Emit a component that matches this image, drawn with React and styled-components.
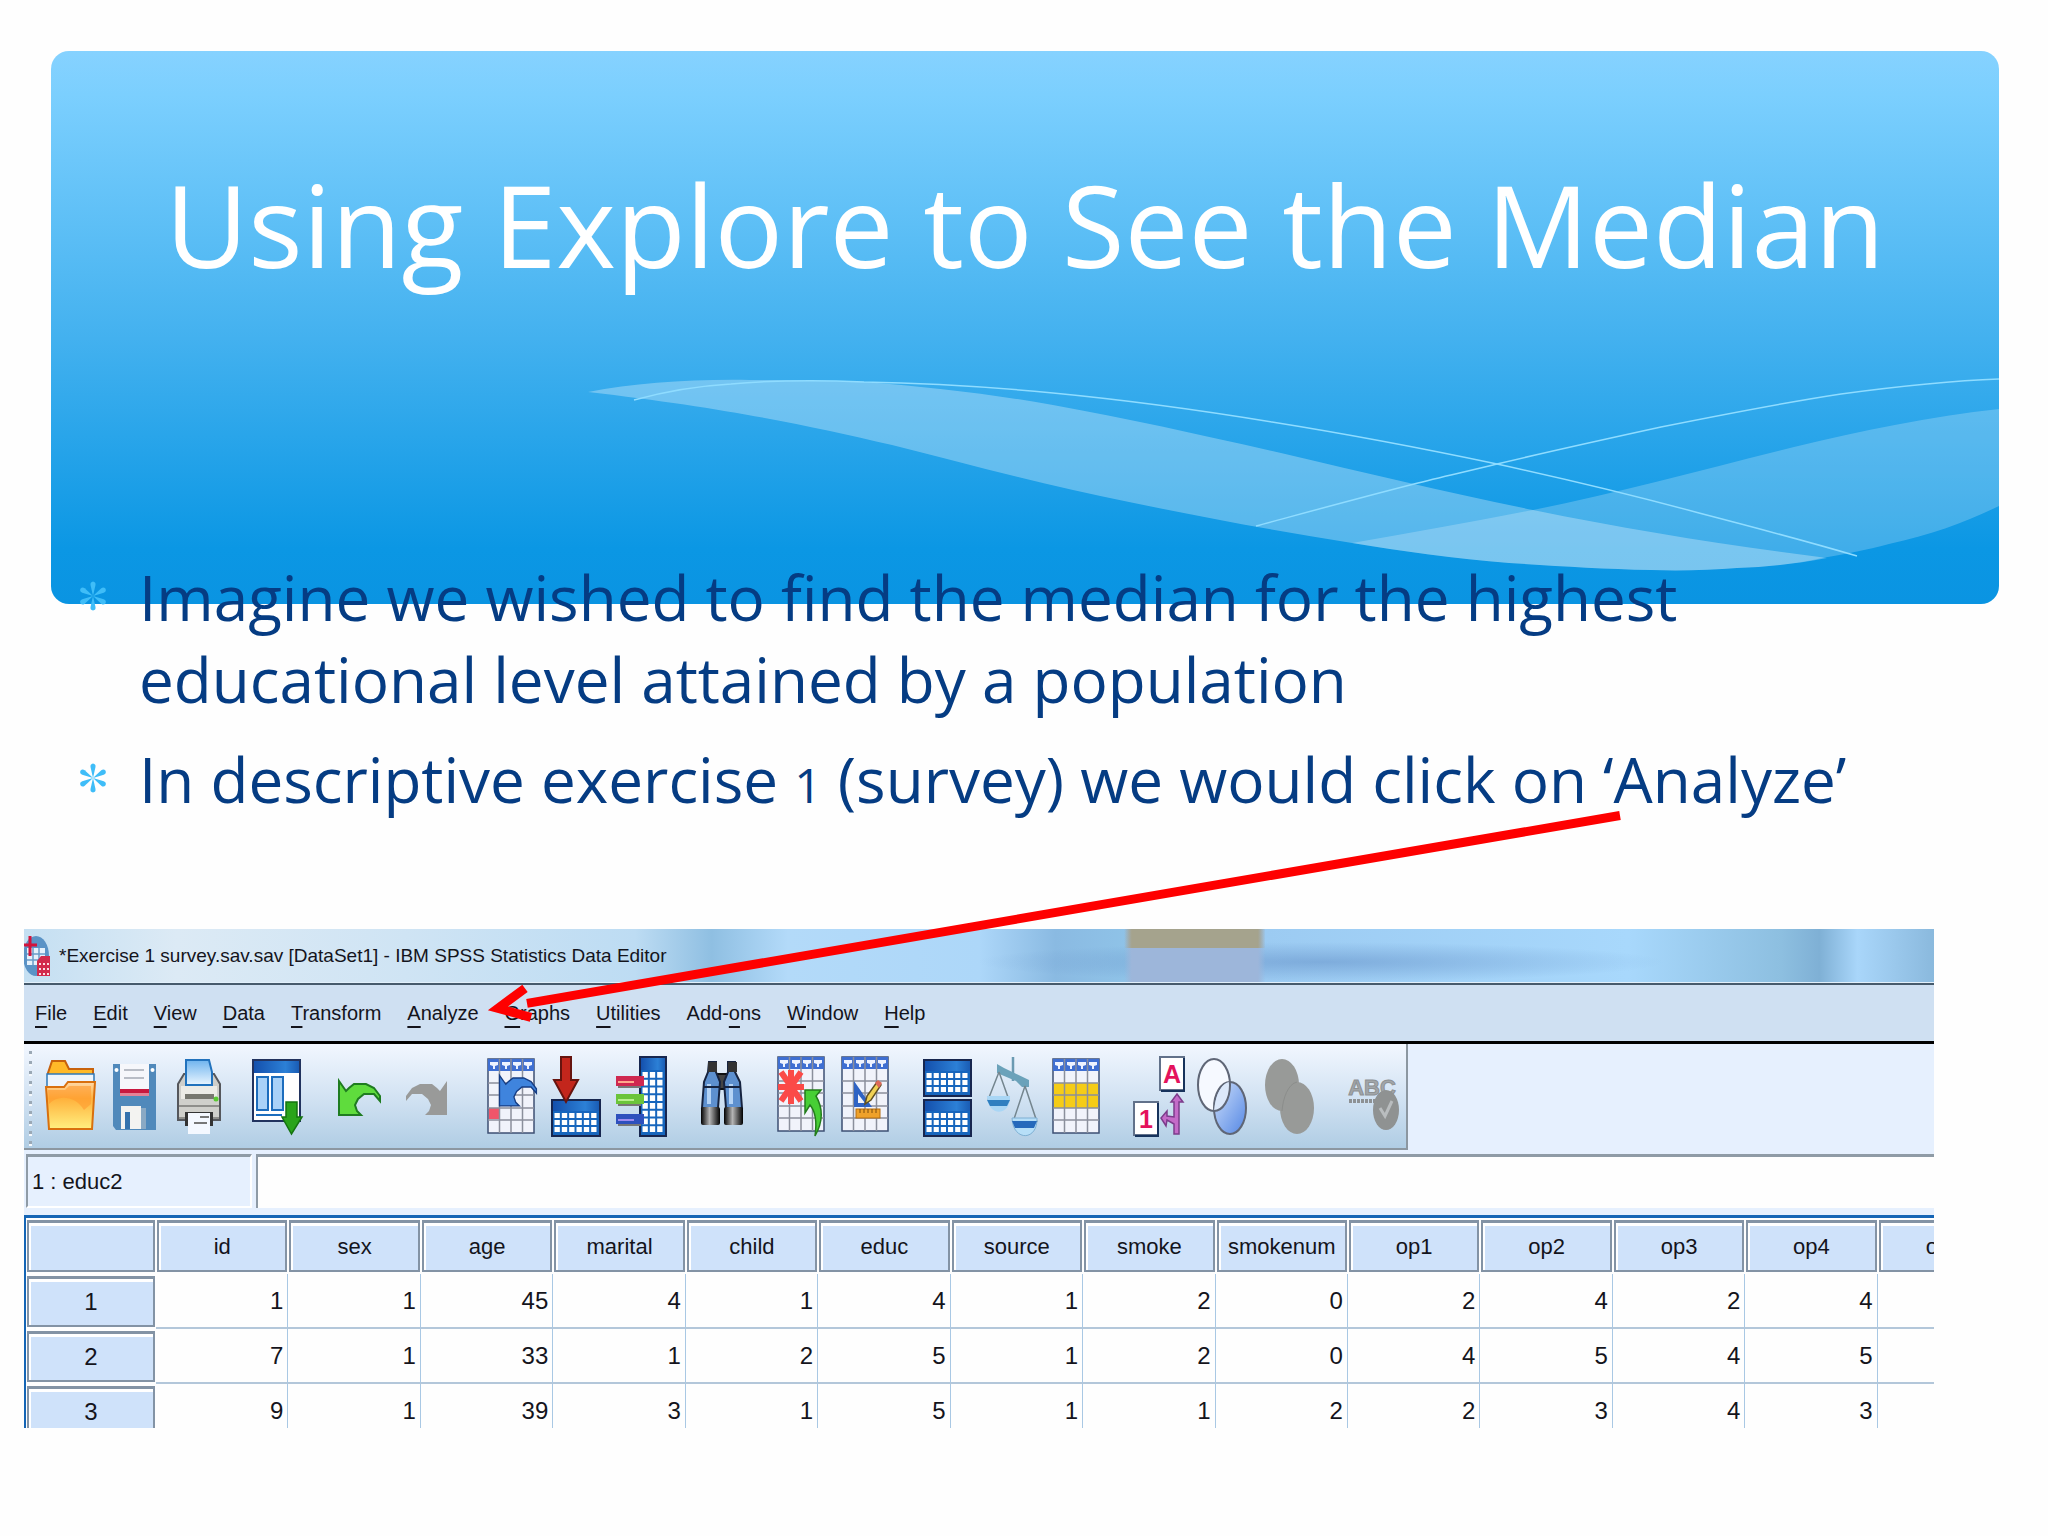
import * as React from 'react';
import styled, { createGlobalStyle } from 'styled-components'

const GlobalStyle = createGlobalStyle`
      body {
        margin: 0;
        background: #fefefe;
      }
      * {
        box-sizing: border-box;
      }
`

const Slide = styled.main`
      position: relative;
      padding: 51px 49px 107px 51px;
      font-family: "Open Sans", sans-serif;
      overflow: hidden;
`

const Banner = styled.header`
      position: relative;
      min-height: 553px;
      padding-top: 96px;
      border-radius: 18px;
      overflow: hidden;
      background: linear-gradient(#86d2ff, #7bcffe 8%, #43b1ef 52%, #0b97e4 90%, #0a94e2);
`

const Waves = styled.svg`
      position: absolute;
      inset: 0;
      width: 100%;
      height: 100%;
`

const Title = styled.h1`
      position: relative;
      margin: 0;
      font-size: 114px;
      line-height: 154px;
      font-weight: 400;
      text-align: center;
      color: white;
`

const Bullets = styled.ul`
      position: relative;
      list-style: none;
      margin: -48px 60px 0 28px;
      padding: 0;
      display: flex;
      flex-direction: column;
      gap: 18px;
`

const Bullet = styled.li`
      display: flex;
      gap: 32px;
      font-size: 62px;
      line-height: 82px;
      color: #053c83;

      > svg {
        flex: none;
        width: 28px;
        height: 82px;
      }
`

const OldNumeral = styled.span`
      font-size: 48px;
      line-height: 1;
`

const Arrow = styled.svg`
      position: absolute;
      left: 0;
      top: 0;
      width: 100%;
      height: 100%;
      pointer-events: none;
`

const Editor = styled.section`
      margin: 109px 65px 0 -27px;
      font-family: "Liberation Sans", Arial, sans-serif;
      color: #14141c;
      background: #e6f0fe;
      overflow: hidden;
`

const TitleBar = styled.div`
      display: flex;
      align-items: center;
      gap: 9px;
      height: 54px;
      border-bottom: 1px solid #e2f0fb;
      background:
        linear-gradient(90deg, transparent 57.6%, #a5a38d 58%, #a5a38d 64.6%, transparent 65%) 0 0 / 100% 19px no-repeat,
        linear-gradient(90deg, transparent 57.6%, #9db6da 58%, #9db6da 64.6%, transparent 65%),
        radial-gradient(closest-side, rgba(100, 145, 200, .55), transparent) 78% 100% / 36% 40px no-repeat,
        linear-gradient(90deg, #c4dff2, #dceaf5 8%, #cfe4f4 20%, #bddcf3 32%, #8fbfe2 36%, #b3daf9 40%, #add7f9 50%, #8abae2 54%, #8fc3e8 58%, #9ccbf2 65%, #a8d8fc 84%, #8dbfe0 92%, #7fb0d5 94%, #a9d6fa 96%, #8ab9dd);
`

const TitleText = styled.h2`
      margin: 0;
      font-size: 19px;
      font-weight: 400;
      white-space: nowrap;
`

const MenuBar = styled.nav`
      display: flex;
      align-items: center;
      gap: 26px;
      height: 61px;
      padding: 0 11px;
      background: #cfe0f2;
      border-top: 2px solid #465a6c;
      border-bottom: 3px solid black;
`

const MenuItem = styled.button`
      border: 0;
      padding: 0;
      background: none;
      font: inherit;
      font-size: 20px;
      line-height: 32px;
      color: inherit;

      u {
        text-underline-offset: 6px;
        text-decoration-thickness: 2px;
      }
`

const Toolbar = styled.div`
      display: flex;
      gap: 31px;
      width: fit-content;
      height: 106px;
      padding: 10px 6px 10px 20px;
      background:
        repeating-linear-gradient(transparent 0 5px, #9aa8b5 5px 8px, #f4f8fc 8px 10px) 5px 2px / 3px 100px no-repeat,
        linear-gradient(#f2f7ff, #d3e3f3 50%, #b0cde4);
      border-right: 2px solid #8c97a1;
      border-bottom: 2px solid #8c97a1;
`

const ToolGroup = styled.div`
      display: flex;
      gap: 12px;
`

const ToolButton = styled.button`
      width: 52px;
      height: 84px;
      padding: 0;
      border: 0;
      background: none;

      svg {
        display: block;
        width: 52px;
        height: 84px;
        overflow: visible;
      }
`

const CellBar = styled.div`
      display: flex;
      gap: 4px;
      height: 65px;
      padding: 4px 0 7px 2px;
`

const CellName = styled.label`
      flex: none;
      width: 226px;
      padding: 0 4px;
      font-size: 22px;
      line-height: 50px;
      border-top: 3px solid #8f9ba6;
      border-left: 2px solid #8f9ba6;
      border-right: 2px solid white;
      border-bottom: 2px solid white;
`

const CellInput = styled.input`
      flex: 1;
      min-width: 0;
      border: 0;
      border-top: 3px solid #8f9ba6;
      border-left: 2px solid #8f9ba6;
      background: #fefefe;
      font: inherit;
      font-size: 22px;
      outline: 0;
`

const Grid = styled.div`
      max-height: 213px;
      overflow: hidden;
      border-top: 3px solid #1565b5;
      border-left: 2px solid #1565b5;
      background: #fefefe;
`

const Sheet = styled.table`
      width: 104%;
      table-layout: fixed;
      border-collapse: separate;
      border-spacing: 0;
      font-size: 24px;
      line-height: 50px;
`

const HeadCell = styled.th`
      width: ${props => props.$corner ? '130px' : 'auto'};
      padding: 2px 1px;
      font-weight: 400;

      > div {
        height: ${props => props.$row ? '51px' : '52px'};
        line-height: ${props => props.$row ? '46px' : '48px'};
        font-size: ${props => props.$row ? '24px' : '22px'};
        background: #cfe2fa;
        border: 2px solid #8393a5;
        border-top-width: 3px;
        box-shadow: inset 2px 3px white;
      }
`

const DataCell = styled.td`
      height: 55px;
      padding: 0 4px;
      text-align: right;
      border-right: 1px solid #a9c8e4;
      border-bottom: 2px solid #b3c7da;
`

const menus = [
  ['', 'F', 'ile'], ['', 'E', 'dit'], ['', 'V', 'iew'], ['', 'D', 'ata'],
  ['', 'T', 'ransform'], ['', 'A', 'nalyze'], ['', 'G', 'raphs'],
  ['', 'U', 'tilities'], ['Add-', 'o', 'ns'], ['', 'W', 'indow'], ['', 'H', 'elp']
]

const columns = ['id', 'sex', 'age', 'marital', 'child', 'educ', 'source', 'smoke', 'smokenum', 'op1', 'op2', 'op3', 'op4', 'op5']

const rows = [
  [1, 1, 45, 4, 1, 4, 1, 2, 0, 2, 4, 2, 4, ''],
  [7, 1, 33, 1, 2, 5, 1, 2, 0, 4, 5, 4, 5, ''],
  [9, 1, 39, 3, 1, 5, 1, 1, 2, 2, 3, 4, 3, '']
]

function Asterisk() {
  return (
    <svg viewBox="0 0 28 82" fill="#3fbdf8" aria-hidden="true">
      {[0, 60, 120, 180, 240, 300].map(angle => (
        <path key={angle} transform={`rotate(${angle} 14 40)`} d="M14 40 L11.5 29 Q11 26 14 25.5 Q17 26 16.5 29 Z" />
      ))}
    </svg>
  )
}

// Spreadsheet page with a blue filter row on top, shared by several buttons
function Page({y = 2, children}) {
  return (
    <g transform={`translate(0 ${y})`}>
      <rect x="3" y="1" width="46" height="74" fill="#f1f3fb" stroke="#3d4f73" strokeWidth="1.5" />
      <rect x="3" y="1" width="46" height="12" fill="#3f6fd2" />
      <path d="M5 4h8v3l-3 1v3h-2v-3l-3-1zM17 4h8v3l-3 1v3h-2v-3l-3-1zM28 4h8v3l-3 1v3h-2v-3l-3-1zM39 4h8v3l-3 1v3h-2v-3l-3-1z" fill="#eef3ff" />
      {children}
      <path d="M3 25h46M3 37h46M3 50h46M3 62h46M14.500 1v74M26 1v74M37.500 1v74" stroke="#8b8f9c" strokeWidth="1.5" />
    </g>
  )
}

// Small blue table with a solid header
function MiniTable({x, y, w, h, head, cols, lines}) {
  const stepX = (w - 4) / cols
  const stepY = (h - head - 3) / lines
  return (
    <g transform={`translate(${x} ${y})`}>
      <rect width={w} height={h} fill="#1766bd" stroke="#17264f" strokeWidth="2" />
      <rect x="1" y="1" width={w - 2} height={head - 2} fill="url(#headBlue)" />
      {Array.from({length: cols * lines}, (_, i) => (
        <rect key={i} x={2.5 + (i % cols) * stepX} y={head + 1 + Math.floor(i / cols) * stepY} width={stepX - 2} height={stepY - 2} fill="white" />
      ))}
    </g>
  )
}

const bend = 'M5 27 L12 37 L15 34 L20 30 H32 L40 34 L46 42 V47 L40 40 H30 L24 45 L21 51 L23 57 L27 61 H5 Z'

const icons = {
  Open: <>
    <path d="M4 22V19L8 7H21L25 15H49V24H4Z" fill="#ffb928" stroke="#c8620c" strokeWidth="2" />
    <path d="M3 20H50V34H3Z" fill="#eef5fd" stroke="#2f79b8" strokeWidth="1.500" />
    <path d="M2 33H20L24 28H51L48 75H5Z" fill="url(#folder)" stroke="#d9700e" strokeWidth="2" />
    <path d="M5 50C14 40 32 42 40 56L47 50L47 32H25L21 36H4Z" fill="#ff9a2e" opacity=".6" />
  </>,
  Save: <>
    <path d="M5 10H48V76H8L5 72Z" fill="#5089bb" />
    <path d="M12 10H41V36H12Z" fill="#f6f7fb" />
    <path d="M16 16H36M16 24H36" stroke="#b9bdc6" strokeWidth="2" />
    <path d="M12 35H41V39H12Z" fill="#c9183f" />
    <path d="M12 39H41V42H12Z" fill="#e58297" />
    <circle cx="8.500" cy="16" r="2" fill="white" /><circle cx="44.500" cy="16" r="2" fill="white" />
    <path d="M13 52H33V75H13Z" fill="#f3f3f1" />
    <path d="M17 58H22V75H17Z" fill="#3472ad" />
    <path d="M33 54H38V75H33Z" fill="#8aa9c4" />
  </>,
  Print: <>
    <path d="M6 30L12 20H42L48 30V66H6Z" fill="#cfcfcb" stroke="#55575c" strokeWidth="2" />
    <path d="M14 6H37L40 18V31H14Z" fill="url(#paper)" stroke="#2172bd" strokeWidth="2" />
    <path d="M9 32H45V45H9Z" fill="#ecebe6" />
    <path d="M13 40H42V45H13Z" fill="#77776f" />
    <circle cx="44" cy="45" r="2.500" fill="#59c932" />
    <path d="M7 52H47M7 64H47" stroke="#8e8e8b" strokeWidth="2" />
    <path d="M13 58H41V72H13Z" fill="#333" />
    <path d="M16 59H38V80H16Z" fill="#f4f8ff" />
    <path d="M28 63H37M22 69H35" stroke="#777" strokeWidth="2" />
  </>,
  'Recall dialogs': <>
    <rect x="2" y="6" width="47" height="61" fill="white" stroke="#22335f" strokeWidth="2" />
    <rect x="3" y="7" width="45" height="12" fill="url(#headBlue)" />
    <path d="M6 23H17V56H6ZM21 23H32V56H21Z" fill="#a9d2f8" stroke="#1c6dbd" strokeWidth="2" />
    <path d="M5 61H31" stroke="#1c6dbd" strokeWidth="2" />
    <path d="M35 48H46V63H51L40.500 80L31 63H35Z" fill="#2aa41a" stroke="#157310" strokeWidth="1.500" />
  </>,
  Undo: <path d={bend} fill="#5fdc3d" stroke="#1f7c20" strokeWidth="2" />,
  Redo: <path d={bend} transform="matrix(-1 0 0 1 50 0)" fill="#999a99" />,
  'Go to case': <>
    <Page y={4}><rect x="4" y="50" width="10" height="11" fill="#f0566a" /></Page>
    <path d={bend} transform="translate(10 -3) scale(.9)" fill="#3f84dd" stroke="#163d84" strokeWidth="1.500" />
  </>,
  'Go to variable': <>
    <MiniTable x={3} y={46} w={48} h={36} head={12} cols={6} lines={3} />
    <path d="M12 3H22V26H29L17 48L5 26H12Z" fill="#c3261c" stroke="#66140f" strokeWidth="2" />
  </>,
  Variables: <>
    <MiniTable x={27} y={3} w={26} h={79} head={14} cols={3} lines={8} />
    <rect x="3" y="22" width="28" height="10" fill="#cf2850" /><rect x="5" y="27" width="16" height="2" fill="#ffa98c" />
    <rect x="3" y="40" width="28" height="10" fill="#6bc43b" /><rect x="5" y="45" width="16" height="2" fill="#b8f08d" />
    <rect x="3" y="60" width="28" height="10" fill="#2e50bd" /><rect x="5" y="65" width="16" height="2" fill="#9d8bf0" />
    <path d="M5 33H28M5 51H28M5 71H28" stroke="#777" strokeWidth="2" />
  </>,
  Find: <>
    <path d="M21 20H31V35H21Z" fill="#444" stroke="#111" strokeWidth="2" />
    <path d="M13 8H20V18L24 28L22 54H6L8 28L12 18Z" fill="#5d90cf" stroke="#16233f" strokeWidth="2" />
    <path d="M32 8H39V18L44 28L46 54H30L28 28L32 18Z" fill="#5d90cf" stroke="#16233f" strokeWidth="2" />
    <path d="M12 8H21V18H12ZM32 8H41V18H32Z" fill="#333" />
    <path d="M13 30V50M35 30V50" stroke="#b4d3f5" strokeWidth="4" />
    <path d="M8 33H23M29 33H44" stroke="#16233f" strokeWidth="2" />
    <rect x="5" y="53" width="19" height="18" rx="2" fill="url(#lens)" />
    <rect x="28" y="53" width="19" height="18" rx="2" fill="url(#lens)" />
  </>,
  'Insert cases': <>
    <Page />
    <path d="M16 16V50M6 18L26 47M26 18L6 47M3 33H29" stroke="#fb4a48" strokeWidth="6" />
    <path d="M30 36H46L41 42C48 54 48 68 40 82C42 68 41 58 35 51L30 59Z" fill="#47cf35" stroke="#237c1c" strokeWidth="1.500" />
  </>,
  'Insert variable': <>
    <Page />
    <path d="M15 27V53H33ZM19 40L26 49H19Z" fill="#2f63c4" fillRule="evenodd" />
    <path d="M26 50L28 42L38 28L42 31L32 46Z" fill="#f0d155" stroke="#604f22" strokeWidth="1.500" />
    <path d="M36 29L39 26L43 29L40 34Z" fill="#dc6a5a" />
    <rect x="17" y="55" width="24" height="9" fill="#efa12a" stroke="#b36d10" strokeWidth="1" />
    <path d="M21 55V59M25 55V59M29 55V59M33 55V59M37 55V59" stroke="#7c4d0c" strokeWidth="1" />
  </>,
  'Split file': <>
    <MiniTable x={2} y={6} w={47} h={36} head={12} cols={6} lines={3} />
    <MiniTable x={2} y={46} w={47} h={36} head={12} cols={6} lines={3} />
  </>,
  'Weight cases': <>
    <path d="M27 3V27" stroke="#6b9ab2" strokeWidth="2.500" />
    <path d="M11 10L18 14L43 26V33H36L30 27L11 19Z" fill="#6ba2ba" />
    <path d="M13 18L2 46M13 18L23 46M39 32L27 68M39 32L51 68" stroke="#74858e" strokeWidth="1.500" />
    <path d="M1 42H24C25 62 2 64 1 42Z" fill="#a9d6f5" />
    <path d="M1 46H24L21 52H4Z" fill="#2f7fc0" />
    <path d="M26 64H51C52 87 27 88 26 64Z" fill="#b7dff8" stroke="#7fb0d3" />
    <path d="M26 67H51L48 74H29Z" fill="#2669bb" />
  </>,
  'Select cases': <Page y={4}><rect x="4" y="25" width="44" height="25" fill="#f5cc17" /></Page>,
  'Value labels': <>
    <rect x="27" y="3" width="24" height="33" fill="white" stroke="#61718a" strokeWidth="2" />
    <path d="M51 4V37H28" fill="none" stroke="#17335c" strokeWidth="2" />
    <text x="39" y="29" textAnchor="middle" fontSize="25" fontWeight="700" fill="#e4135c" fontFamily="Liberation Sans">A</text>
    <rect x="1" y="48" width="24" height="33" fill="white" stroke="#61718a" strokeWidth="2" />
    <path d="M25 49V82H2" fill="none" stroke="#17335c" strokeWidth="2" />
    <text x="13" y="74" textAnchor="middle" fontSize="25" fontWeight="700" fill="#e4135c" fontFamily="Liberation Sans">1</text>
    <path d="M44 40L50 48H46V80H41V70L34 66L33 72L28 64L34 57V62L41 63V48H38Z" fill="#c46bc8" stroke="#7c3c8b" strokeWidth="1.500" />
  </>,
  'Use sets': <>
    <ellipse cx="17" cy="31" rx="16" ry="26" fill="#f6f9ff" />
    <ellipse cx="33" cy="54" rx="16" ry="26" fill="url(#setBlue)" stroke="#5f6676" strokeWidth="2" />
    <path d="M17 57C18 44 23 30 32 28C36 40 27 56 17 57Z" fill="#dce8fa" />
    <ellipse cx="17" cy="31" rx="16" ry="26" fill="none" stroke="#5f6676" strokeWidth="2" />
  </>,
  'Show all': <>
    <ellipse cx="17" cy="31" rx="17" ry="26" fill="#989a98" />
    <ellipse cx="32" cy="54" rx="17" ry="26" fill="#989a98" />
    <path d="M17 57C18 44 23 30 32 28" stroke="#8b8d8b" fill="none" />
  </>,
  'Spell check': <>
    <text x="24" y="41" textAnchor="middle" fontSize="22" fontWeight="700" fill="#a2a6a9" stroke="#8d9194" strokeWidth="1" fontFamily="Liberation Sans">ABC</text>
    <path d="M1 47H28" stroke="#8d9194" strokeWidth="4" strokeDasharray="3 1" />
    <ellipse cx="38" cy="56" rx="13" ry="20" fill="#8f9292" />
    <path d="M32 54L37 62L44 47" fill="none" stroke="#b9bdbf" strokeWidth="3" />
  </>
}

// Drawings whose artwork starts left of the button's own edge
const bleedLeft = ['Recall dialogs', 'Undo', 'Insert cases', 'Insert variable', 'Split file', 'Weight cases', 'Select cases', 'Value labels', 'Use sets']

const groups = [
  ['Open', 'Save', 'Print'],
  ['Recall dialogs'],
  ['Undo', 'Redo'],
  ['Go to case', 'Go to variable', 'Variables'],
  ['Find'],
  ['Insert cases', 'Insert variable'],
  ['Split file', 'Weight cases', 'Select cases'],
  ['Value labels', 'Use sets', 'Show all'],
  ['Spell check']
]

const Defs = styled.svg`
      position: absolute;
      width: 0;
      height: 0;
`

function Gradients() {
  return (
    <Defs aria-hidden="true">
      <defs>
        <linearGradient id="headBlue"><stop stopColor="#1450ad" /><stop offset=".7" stopColor="#2c80d6" /><stop offset="1" stopColor="#1a5cb4" /></linearGradient>
        <linearGradient id="folder" x2="0" y2="1"><stop stopColor="#ffd9a8" /><stop offset=".35" stopColor="#ffb13c" /><stop offset="1" stopColor="#fff080" /></linearGradient>
        <linearGradient id="paper" x2="0" y2="1"><stop stopColor="#6fb4ee" /><stop offset="1" stopColor="#e9f5ff" /></linearGradient>
        <linearGradient id="lens"><stop stopColor="#000" /><stop offset=".45" stopColor="#b5b5b5" /><stop offset="1" stopColor="#000" /></linearGradient>
        <linearGradient id="setBlue" x2="1" y2="1"><stop stopColor="#cfe0fb" /><stop offset="1" stopColor="#5487e4" /></linearGradient>
      </defs>
    </Defs>
  )
}

function AppIcon() {
  return (
    <svg width="26" height="42" viewBox="0 0 26 42" aria-hidden="true">
      <ellipse cx="12" cy="21" rx="13" ry="20" fill="#5b93c6" />
      <path d="M3 13H21V30H3Z" fill="#e6f1fb" />
      <path d="M3 19H21M3 25H21M9 13V30M15 13V30" stroke="#6a9cc9" strokeWidth="1.500" />
      <path d="M0 10H13M6 1V21" stroke="#d3133b" strokeWidth="3" />
      <path d="M13 26L17 21H26V41H13Z" fill="#d22a4c" />
      <path d="M15 29H25M15 34H25M15 39H25" stroke="#fbdde3" strokeWidth="2" strokeDasharray="2 2" />
    </svg>
  )
}

export default function App() {
  return (
    <Slide>
      <GlobalStyle />
      <Gradients />
      <Banner>
        <Waves viewBox="0 0 1948 553" preserveAspectRatio="none" aria-hidden="true">
          <path fill="white" fillOpacity=".3" d="M537 341C585 332 640 328 699 329C740 329 780 330 813 331C880 336 940 343 1002 354C1080 368 1150 384 1230 402C1315 422 1395 441 1482 459C1580 479 1680 495 1776 507C1745 513 1715 516 1686 517C1660 519 1630 520 1600 519C1550 518 1505 515 1458 512C1405 508 1350 500 1301 492C1225 480 1150 466 1078 451C995 434 915 413 841 394C755 374 675 357 537 341Z" />
          <path fill="white" fillOpacity=".22" d="M1301 492C1360 482 1420 471 1482 459C1570 441 1655 418 1743 396C1810 380 1880 365 1948 358V455C1915 471 1880 484 1838 493C1815 499 1795 503 1771 507C1745 513 1715 516 1686 517C1660 519 1630 520 1600 519C1550 518 1505 515 1458 512C1405 508 1350 500 1301 492Z" />
          <path fill="none" stroke="#8fdcff" strokeWidth="1.500" d="M583 349C612 341 645 335 680 333C725 329 770 329 813 331C878 332 940 336 1002 342C1075 349 1148 359 1221 371C1296 383 1370 397 1446 413C1515 428 1582 444 1648 462C1702 476 1755 490 1806 505" />
          <path fill="none" stroke="#8fdcff" strokeWidth="1.500" d="M1205 475C1257 461 1308 447 1363 433C1390 426 1418 420 1446 413C1500 400 1555 388 1610 376C1670 364 1730 352 1790 343C1842 336 1895 330 1948 328" />
        </Waves>
        <Title>Using Explore to See the Median</Title>
      </Banner>
      <Bullets>
        <Bullet>
          <Asterisk />
          <span>Imagine we wished to find the median for the highest educational level attained by a population</span>
        </Bullet>
        <Bullet>
          <Asterisk />
          <span>In descriptive exercise <OldNumeral>1</OldNumeral> (survey) we would click on ‘Analyze’</span>
        </Bullet>
      </Bullets>
      <Editor>
        <TitleBar>
          <AppIcon />
          <TitleText>*Exercise 1 survey.sav.sav [DataSet1] - IBM SPSS Statistics Data Editor</TitleText>
        </TitleBar>
        <MenuBar>
          {menus.map(([before, key, after]) => (
            <MenuItem key={key + after} type="button">{before}<u>{key}</u>{after}</MenuItem>
          ))}
        </MenuBar>
        <Toolbar>
          {groups.map(group => (
            <ToolGroup key={group[0]}>
              {group.map(name => (
                <ToolButton key={name} type="button" aria-label={name}>
                  <svg viewBox={bleedLeft.includes(name) ? '4 0 52 84' : '0 0 52 84'} aria-hidden="true">{icons[name]}</svg>
                </ToolButton>
              ))}
            </ToolGroup>
          ))}
        </Toolbar>
        <CellBar>
          <CellName htmlFor="cell">1 : educ2</CellName>
          <CellInput id="cell" type="text" />
        </CellBar>
        <Grid>
          <Sheet>
            <thead>
              <tr>
                <HeadCell $corner><div /></HeadCell>
                {columns.map(name => <HeadCell key={name} scope="col"><div>{name}</div></HeadCell>)}
              </tr>
            </thead>
            <tbody>
              {rows.map((cells, i) => (
                <tr key={i}>
                  <HeadCell $row scope="row"><div>{i + 1}</div></HeadCell>
                  {cells.map((value, j) => <DataCell key={columns[j]}>{value}</DataCell>)}
                </tr>
              ))}
            </tbody>
          </Sheet>
        </Grid>
      </Editor>
      <Arrow viewBox="0 0 2048 1536" preserveAspectRatio="none" aria-hidden="true">
        <path d="M1620 816L527 1004M525 989L498 1009L531 1018" fill="none" stroke="#fe0000" strokeWidth="9" />
      </Arrow>
    </Slide>
  )
}
